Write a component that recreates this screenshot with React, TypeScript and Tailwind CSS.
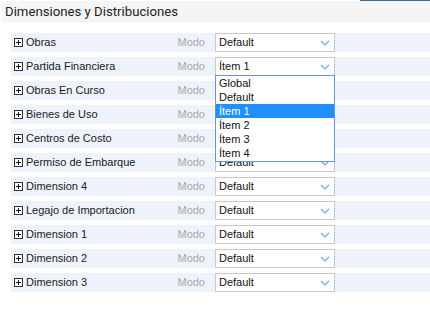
import React from 'react';

const rows = [
  { label: 'Obras', value: 'Default' },
  { label: 'Partida Financiera', value: 'Ítem 1', open: true },
  { label: 'Obras En Curso', value: 'Default' },
  { label: 'Bienes de Uso', value: 'Default' },
  { label: 'Centros de Costo', value: 'Default' },
  { label: 'Permiso de Embarque', value: 'Default' },
  { label: 'Dimension 4', value: 'Default' },
  { label: 'Legajo de Importacion', value: 'Default' },
  { label: 'Dimension 1', value: 'Default' },
  { label: 'Dimension 2', value: 'Default' },
  { label: 'Dimension 3', value: 'Default' },
];

const options = ['Global', 'Default', 'Ítem 1', 'Ítem 2', 'Ítem 3', 'Ítem 4'];

function PlusBox() {
  return (
    <svg width="9" height="9" viewBox="0 0 9 9" className="shrink-0">
      <rect x="0.5" y="0.5" width="8" height="8" fill="#fff" stroke="#333" />
      <path d="M2 4.5h5M4.5 2v5" stroke="#111" strokeWidth="1" />
    </svg>
  );
}

function Chevron() {
  return (
    <svg width="10" height="6" viewBox="0 0 10 6" className="shrink-0">
      <path d="M1 1l4 4 4-4" fill="none" stroke="#6ea6e8" strokeWidth="1.2" />
    </svg>
  );
}

function Select({ value, open }: { value: string; open?: boolean }) {
  return (
    <div className="relative ml-[10px] w-[120px] h-[19px]">
      <div className="flex items-center h-full border border-[#c8c8c8] bg-white pl-[3px] pr-[4px]">
        <span className="flex-1 text-[11px] text-[#111]">{value}</span>
        <Chevron />
      </div>
      {open && (
        <ul className="absolute left-0 top-[18px] z-10 w-[120px] border border-[#6b93d6] bg-white pb-[1px]">
          {options.map((o) => (
            <li
              key={o}
              className={
                o === value
                  ? 'h-[14px] leading-[14px] pl-[3px] text-[11px] bg-[#1e90ff] text-white'
                  : 'h-[14px] leading-[14px] pl-[3px] text-[11px] text-[#111]'
              }
            >
              {o}
            </li>
          ))}
        </ul>
      )}
    </div>
  );
}

export default function App() {
  return (
    <div className="w-[430px] h-[328px] bg-white font-['Liberation_Sans',Arial,sans-serif] overflow-hidden">
      <div className="h-[1px] ml-[360px] bg-[#3a6ea5]" />
      <div className="h-[21px] ml-[1px] bg-[#f5f5f5] pl-[4px] flex items-center">
        <h2 className="font-['Roboto',sans-serif] text-[13.2px] text-[#222]">Dimensiones y Distribuciones</h2>
      </div>
      <div className="pl-[11px] pt-[11px] flex flex-col gap-[5px]">
        {rows.map((r) => (
          <div key={r.label} className="flex items-center h-[19px] bg-[#edf3fb]">
            <div className="flex items-center w-[194px] pl-[3px]">
              <PlusBox />
              <span className="ml-[3px] text-[11px] text-[#1a1a1a]">{r.label}</span>
              <span className="ml-auto text-[11px] text-[#a8a8a8]">Modo</span>
            </div>
            <Select value={r.value} open={r.open} />
          </div>
        ))}
      </div>
    </div>
  );
}
